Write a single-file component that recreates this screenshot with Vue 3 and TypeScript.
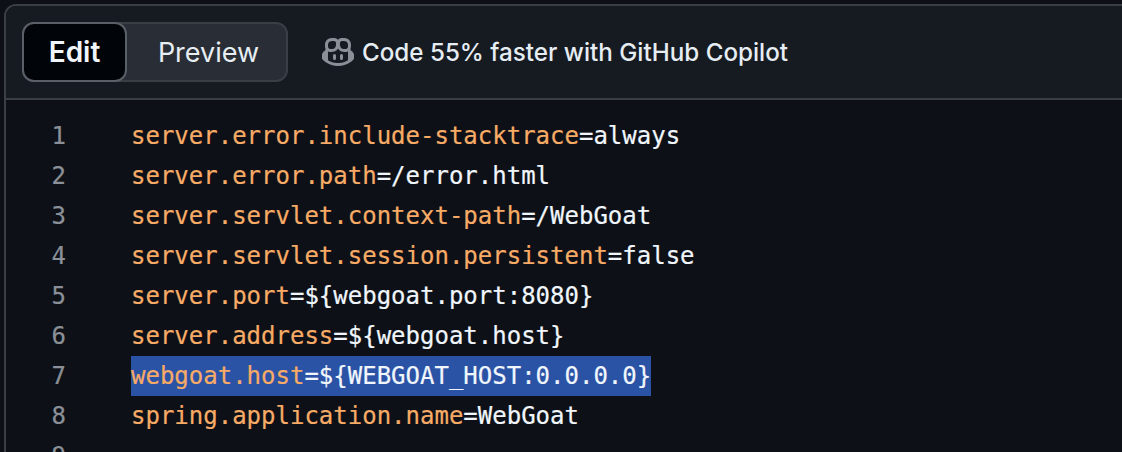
<script setup lang="ts">
interface Part { t: string; c: string }
interface Line { parts: Part[]; sel?: boolean }
const mk = (k: string, v: string, sel = false): Line => ({ parts: [{ t: k, c: 'key' }, { t: v, c: 'val' }], sel })
const lines: Line[] = [
  mk('server.error.include-stacktrace', '=always'),
  mk('server.error.path', '=/error.html'),
  mk('server.servlet.context-path', '=/WebGoat'),
  mk('server.servlet.session.persistent', '=false'),
  mk('server.port', '=${webgoat.port:8080}'),
  mk('server.address', '=${webgoat.host}'),
  mk('webgoat.host', '=${WEBGOAT_HOST:0.0.0.0}', true),
  mk('spring.application.name', '=WebGoat'),
  { parts: [] },
]
</script>

<template>
  <div class="page">
    <div class="box">
      <header class="head">
        <div class="tabs">
          <button class="tab active">Edit</button>
          <button class="tab">Preview</button>
        </div>
        <div class="promo">
          <svg class="icon" viewBox="0 0 16 16" fill="currentColor" aria-hidden="true">
            <path d="M7.998 15.035c-4.562 0-7.873-2.914-7.998-3.749V9.338c.085-.628.677-1.686 1.588-2.065.013-.07.024-.143.036-.218.029-.183.06-.384.126-.612-.201-.508-.254-1.084-.254-1.656 0-.87.128-1.769.693-2.484.579-.733 1.494-1.124 2.724-1.261 1.206-.134 2.262.034 2.944.765.05.053.096.108.139.165.044-.057.094-.112.143-.165.682-.731 1.738-.899 2.944-.765 1.23.137 2.145.528 2.724 1.261.566.715.693 1.614.693 2.484 0 .572-.053 1.148-.254 1.656.066.228.098.429.126.612.012.076.024.148.037.218.924.385 1.522 1.471 1.591 2.095v1.872c0 .766-3.351 3.795-8.002 3.795Zm0-1.485c2.28 0 4.584-1.11 5.002-1.433V7.862l-.023-.116c-.49.21-1.075.291-1.727.291-1.146 0-2.059-.327-2.71-.991A3.222 3.222 0 0 1 8 6.303a3.24 3.24 0 0 1-.544.743c-.65.664-1.563.991-2.71.991-.652 0-1.236-.081-1.727-.291l-.023.116v4.255c.419.323 2.722 1.433 5.002 1.433ZM6.762 2.83c-.193-.206-.637-.413-1.682-.297-1.019.113-1.479.404-1.713.7-.247.312-.369.789-.369 1.554 0 .793.129 1.171.308 1.371.162.181.519.379 1.442.379.853 0 1.339-.235 1.638-.54.315-.322.527-.827.617-1.553.117-.935-.037-1.395-.241-1.614Zm4.155-.297c-1.044-.116-1.488.091-1.681.297-.204.219-.359.679-.242 1.614.091.726.303 1.231.618 1.553.299.305.784.54 1.638.54.922 0 1.28-.198 1.442-.379.179-.2.308-.578.308-1.371 0-.765-.123-1.242-.37-1.554-.233-.296-.693-.587-1.713-.7Z" />
            <path d="M6.25 9.037a.75.75 0 0 1 .75.75v1.501a.75.75 0 0 1-1.5 0V9.787a.75.75 0 0 1 .75-.75Zm4.25.75v1.501a.75.75 0 0 1-1.5 0V9.787a.75.75 0 0 1 1.5 0Z" />
          </svg>
          <span>Code 55% faster with GitHub Copilot</span>
        </div>
      </header>
      <div class="code">
        <div v-for="(line, i) in lines" :key="i" class="row">
          <span class="num">{{ i + 1 }}</span>
          <span class="text" :class="{ sel: line.sel }"><span v-for="p in line.parts" :key="p.t" :class="p.c">{{ p.t }}</span></span>
        </div>
      </div>
    </div>
  </div>
</template>

<style>
html, body { margin: 0; background: #0d1117; overflow: hidden; }
</style>

<style scoped>
.page {
  width: 1122px;
  height: 452px;
  overflow: hidden;
  padding: 4px 0 0 4px;
  box-sizing: border-box;
  background: #0d1117;
  font-family: Inter, "Liberation Sans", sans-serif;
}
.box {
  width: 1140px;
  border: 2px solid #3a3f46;
  border-radius: 12px 0 0 0;
  box-sizing: border-box;
  background: #0d1117;
}
.head {
  display: flex;
  align-items: flex-start;
  padding-top: 16px;
  height: 76px;
  padding-left: 16px;
  background: #161b22;
  border-bottom: 2px solid #3a3f46;
  border-radius: 10px 0 0 0;
  gap: 34px;
}
.tabs {
  display: flex;
  width: 266px;
  height: 60px;
  box-sizing: border-box;
  background: #292d35;
  border: 2px solid #3a3f46;
  border-radius: 12px;
}
.tab {
  appearance: none;
  background: none;
  border: 0;
  padding: 0 0 0 4px;
  margin: 0;
  flex: 1;
  color: #e6edf3;
  font: 400 27px Inter, "Liberation Sans", sans-serif;
}
.tab.active {
  flex: 0 0 105px;
  height: 60px;
  margin: -2px 0 -2px -2px;
  padding: 0;
  box-sizing: border-box;
  background: #010409;
  border: 2px solid #5a6068;
  border-radius: 12px;
  font-size: 28px;
  font-weight: 600;
  color: #f0f6fc;
}
.promo {
  display: flex;
  align-items: center;
  gap: 8px;
  height: 60px;
  color: #e6edf3;
  font-size: 24.2px;
  font-weight: 500;
}
.icon {
  width: 32px;
  height: 32px;
  color: #8b9098;
}
.code {
  padding-top: 16px;
  font: 24px/40px "DejaVu Sans Mono", monospace;
  -webkit-text-stroke: 0.2px currentColor;
}
.row {
  display: flex;
  height: 40px;
}
.num {
  width: 60px;
  text-align: right;
  color: #8b9098;
  flex: none;
}
.text {
  margin-left: 65px;
  white-space: pre;
  color: #f0f6fc;
}
.text.sel { background: #2a52a5; }
.key { color: #f7ab66; }
.val { color: #f0f6fc; }
</style>
